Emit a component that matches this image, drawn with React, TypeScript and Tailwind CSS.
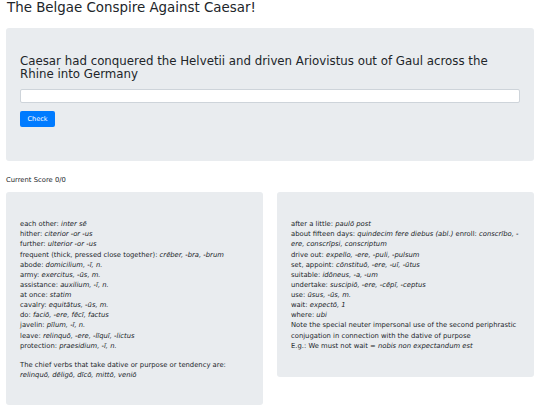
import React from 'react';

type Entry = [string, string];

const leftVocab: Entry[] = [
  ['each other: ', 'inter sē'],
  ['hither: ', 'citerior -or -us'],
  ['further: ', 'ulterior -or -us'],
  ['frequent (thick, pressed close together): ', 'crēber, -bra, -brum'],
  ['abode: ', 'domicilium, -ī, n.'],
  ['army: ', 'exercitus, -ūs, m.'],
  ['assistance: ', 'auxilium, -ī, n.'],
  ['at once: ', 'statim'],
  ['cavalry: ', 'equitātus, -ūs, m.'],
  ['do: ', 'faciō, -ere, fēcī, factus'],
  ['javelin: ', 'pīlum, -ī, n.'],
  ['leave: ', 'relinquō, -ere, -līquī, -lictus'],
  ['protection: ', 'praesidium, -ī, n.'],
];

const rightVocab: Entry[] = [
  ['drive out: ', 'expello, -ere, -puli, -pulsum'],
  ['set, appoint: ', 'cōnstituō, -ere, -uī, -ūtus'],
  ['suitable: ', 'idōneus, -a, -um'],
  ['undertake: ', 'suscipiō, -ere, -cēpī, -ceptus'],
  ['use: ', 'ūsus, -ūs, m.'],
  ['wait: ', 'expectō, 1'],
  ['where: ', 'ubi'],
];

const Line: React.FC<{ children: React.ReactNode }> = ({ children }) => (
  <div className="whitespace-nowrap">{children}</div>
);

const VocabLine: React.FC<{ entry: Entry }> = ({ entry }) => (
  <Line>
    {entry[0]}
    <em>{entry[1]}</em>
  </Line>
);

const App: React.FC = () => {
  return (
    <div className="min-h-screen bg-white px-[6px] font-['DejaVu_Sans',sans-serif] text-[#212529]">
      <h1 className="pl-[1px] text-[13.4px] leading-[16px] font-normal">
        The Belgae Conspire Against Caesar!
      </h1>

      <div className="mt-[12px] rounded-[3px] bg-[#e9ecef] px-[14px] pt-[27px] pb-[33px]">
        <h4 className="text-[11.8px] leading-[13px] font-normal">
          Caesar had conquered the Helvetii and driven Ariovistus out of Gaul across the Rhine into Germany
        </h4>
        <input
          type="text"
          className="mt-[8px] block h-[14px] w-full rounded-[2px] border border-[#ced4da] bg-white"
        />
        <button className="mt-[8px] h-[16px] w-[35px] rounded-[2px] bg-[#007bff] text-[6.5px] leading-[16px] text-white">
          Check
        </button>
      </div>

      <div className="mt-[14px] text-[6.8px] leading-[10.13px]">Current Score 0/0</div>

      <div className="mt-[7px] grid grid-cols-2 items-start gap-[14px] text-[6.8px] leading-[10.13px]">
        <div className="rounded-[3px] bg-[#e9ecef] px-[14px] pt-[27px] pb-[24px]">
          {leftVocab.map((e) => (
            <VocabLine key={e[0]} entry={e} />
          ))}
          <div className="mt-[9.5px]">
            <Line>The chief verbs that take dative or purpose or tendency are:</Line>
            <Line>
              <em>relinquō, dēligō, dīcō, mittō, veniō</em>
            </Line>
          </div>
        </div>

        <div className="rounded-[3px] bg-[#e9ecef] px-[14px] pt-[27px] pb-[26px]">
          <Line>
            after a little: <em>paulō post</em>
          </Line>
          <Line>
            about fifteen days: <em>quindecim fere diebus (abl.)</em> enroll: <em>conscrībo, -</em>
          </Line>
          <Line>
            <em>ere, conscrīpsi, conscriptum</em>
          </Line>
          {rightVocab.map((e) => (
            <VocabLine key={e[0]} entry={e} />
          ))}
          <Line>Note the special neuter impersonal use of the second periphrastic</Line>
          <Line>conjugation in connection with the dative of purpose</Line>
          <Line>
            E.g.: We must not wait = <em>nobis non expectandum est</em>
          </Line>
        </div>
      </div>
    </div>
  );
};

export default App;
